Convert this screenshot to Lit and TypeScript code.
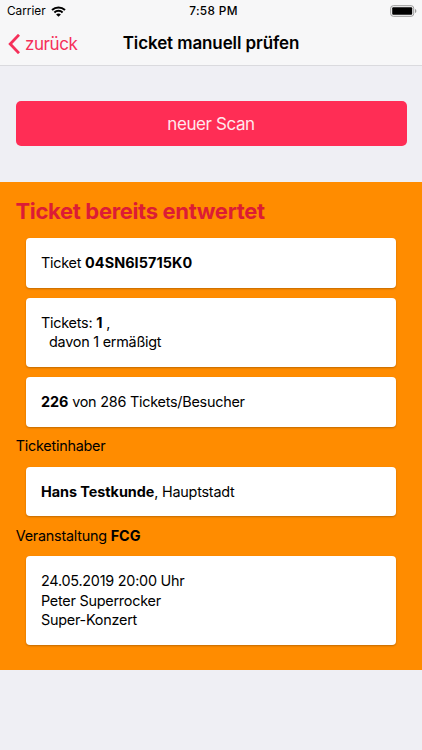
import { LitElement, html, css } from "lit";
import { customElement } from "lit/decorators.js";

@customElement("info-card")
class InfoCard extends LitElement {
  static styles = css`
    :host {
      display: block;
      box-sizing: border-box;
      padding: 15px 15px 15.3px;
      background: #fff;
      border-radius: 4px;
      box-shadow: 0 1px 2px rgba(0, 0, 0, 0.24);
    }
  `;
  render() {
    return html`<slot></slot>`;
  }
}

@customElement("app-root")
class AppRoot extends LitElement {
  static styles = css`
    :host {
      display: flex;
      flex-direction: column;
      height: 750px;
      background: #efeff4;
      color: #000;
      font: 14.4px/19.6px Inter, "Liberation Sans", sans-serif;
      overflow: hidden;
      white-space: nowrap;
    }
    .status, .nav {
      display: grid;
      grid-template-columns: 1fr auto 1fr;
      align-items: center;
      background: #f7f7f8;
    }
    .status {
      height: 22px;
      padding: 0 5px 0 7px;
      font-size: 11.8px;
      line-height: 22px;
    }
    .carrier { display: flex; align-items: center; gap: 5px; }
    .clock { font-weight: 500; letter-spacing: 0.35px; padding-left: 3px; }
    .battery { justify-self: end; display: block; }
    .nav {
      height: 43px;
      padding: 0 8px;
      border-bottom: 1px solid #dadade;
    }
    .back {
      display: flex;
      align-items: center;
      gap: 5px;
      color: #f5305a;
      font-size: 17px;
      line-height: 20px;
      letter-spacing: -0.42px;
    }
    .title { font-size: 17px; font-weight: 600; letter-spacing: -0.1px; }
    .action {
      box-sizing: border-box;
      height: 45px;
      margin: 35px 15.5px 36px;
      padding: 0;
      border: 0;
      border-radius: 5px;
      background: #ff2d55;
      color: #ffe8ed;
      font: 17px/46px Inter, "Liberation Sans", sans-serif;
      letter-spacing: -0.4px;
      flex: none;
    }
    .result {
      box-sizing: border-box;
      height: 488px;
      padding: 15px 26px 0;
      background: #ff8c00;
      letter-spacing: -0.24px;
      flex: none;
    }
    h1 {
      margin: 0 0 12.8px -10.5px;
      color: #dc1c35;
      font-size: 22px;
      line-height: 28px;
      font-weight: 700;
      letter-spacing: -0.34px;
    }
    .stack { display: grid; gap: 10px; }
    .label { margin: 9.4px 0 10.5px -10.3px; }
    .indent { padding-left: 8px; }
    b { font-weight: 700; letter-spacing: -0.04px; }
    .code { letter-spacing: 0.08px; }
  `;
  render() {
    return html`
      <div class="status">
        <div class="carrier"><span class="carrier-name">Carrier</span>
          <svg width="15" height="11" viewBox="0 0 15 11" fill="none" stroke="#000" stroke-width="2">
            <path d="M1 4.1C4.7.6 10.3.6 14 4.1M3.4 6.5c2.3-2.2 5.9-2.2 8.2 0" />
            <path d="M7.5 10.8 5.1 8.4c1.3-1.3 3.5-1.3 4.8 0z" fill="#000" stroke="none" />
          </svg>
        </div>
        <span class="clock">7:58 PM</span>
        <svg class="battery" width="27" height="12" viewBox="0 0 27 12">
          <rect x=".7" y=".7" width="23" height="10.6" rx="2.6" fill="none" stroke="#999" />
          <rect x="2.2" y="2.2" width="20" height="7.6" rx="1" />
          <path d="M25 4v4c1.8-.5 1.8-3.5 0-4z" fill="#999" />
        </svg>
      </div>
      <div class="nav">
        <div class="back">
          <svg width="12" height="20" viewBox="0 0 12 20" fill="none" stroke="currentColor" stroke-width="2.8">
            <path d="M11 .8 2.2 10 11 19.2" />
          </svg><span class="back-text">zurück</span>
        </div>
        <span class="title">Ticket manuell prüfen</span>
      </div>
      <button class="action">neuer Scan</button>
      <section class="result">
        <h1>Ticket bereits entwertet</h1>
        <div class="stack">
          <info-card>Ticket <b class="code">04SN6I5715K0</b></info-card>
          <info-card>Tickets: <b>1</b> ,<div class="indent">davon 1 ermäßigt</div></info-card>
          <info-card><b>226</b> von 286 Tickets/Besucher</info-card>
        </div>
        <div class="label">Ticketinhaber</div>
        <info-card><b>Hans Testkunde</b>, Hauptstadt</info-card>
        <div class="label">Veranstaltung <b>FCG</b></div>
        <info-card>24.05.2019 20:00 Uhr<br />Peter Superrocker<br />Super-Konzert</info-card>
      </section>
    `;
  }
}
